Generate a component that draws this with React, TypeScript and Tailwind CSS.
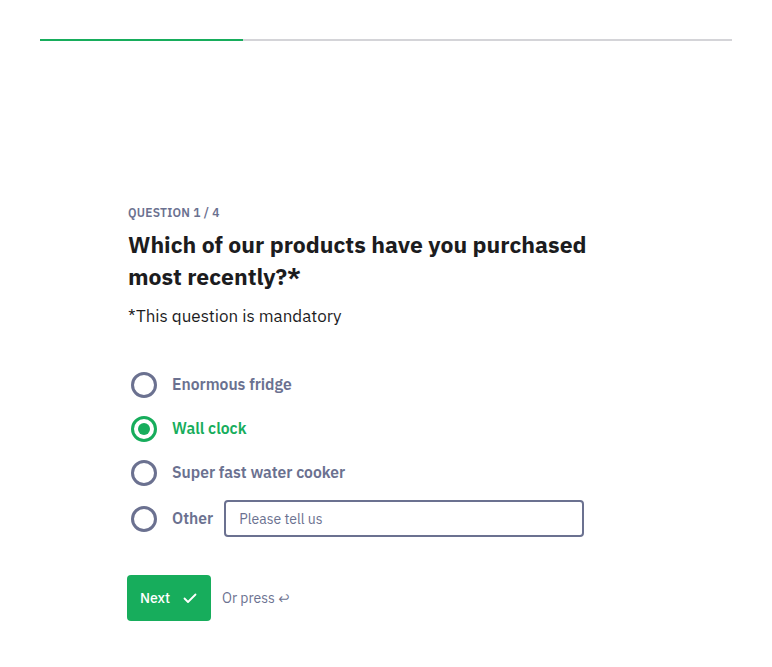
import React from "react";

const font = { fontFamily: '"IBM Plex Sans", Inter, "Noto Sans", sans-serif' };

function Radio({ checked }: { checked?: boolean }) {
  return (
    <span
      className={
        "flex h-[26px] w-[26px] shrink-0 items-center justify-center rounded-full border-[3px] " +
        (checked ? "border-[#17ad5c]" : "border-[#6b7190]")
      }
    >
      {checked && <span className="h-[12px] w-[12px] rounded-full bg-[#17ad5c]" />}
    </span>
  );
}

export default function App() {
  const options = ["Enormous fridge", "Wall clock", "Super fast water cooker"];
  return (
    <div className="min-h-[667px] w-full bg-white" style={font}>
      <div className="px-[40px] pt-[39px]">
        <div className="flex h-[2px] w-full bg-[#d4d4d8]">
          <div className="h-full w-[203px] bg-[#17ad5c]" />
        </div>
      </div>
      <div className="pl-[128px] pt-[163px]">
        <div className="text-[12px] font-semibold tracking-[0.02em] text-[#6b7190] leading-[18px]">
          QUESTION 1 / 4
        </div>
        <h1 className="mt-[6px] w-[470px] text-[23px] font-bold leading-[32px] text-[#1c1c1e]">
          Which of our products have you purchased most recently?*
        </h1>
        <p className="mt-[12px] text-[17px] leading-[24px] text-[#1c1c1e]">*This question is mandatory</p>

        <div className="mt-[44px] flex flex-col gap-[18px] pl-[3px]">
          {options.map((o, i) => (
            <div key={o} className="flex h-[26px] items-center gap-[15px]">
              <Radio checked={i === 1} />
              <span
                className={
                  "text-[15.7px] font-semibold " + (i === 1 ? "text-[#17ad5c]" : "text-[#6b7190]")
                }
              >
                {o}
              </span>
            </div>
          ))}
          <div className="-mt-[4px] flex items-center gap-[15px]">
            <Radio />
            <span className="text-[15.7px] font-semibold text-[#6b7190]">Other</span>
            <input
              placeholder="Please tell us"
              className="ml-[-4px] h-[37px] w-[360px] rounded-[4px] border-2 border-[#6b7190] px-[13px] text-[14px] text-[#1c1c1e] outline-none placeholder:text-[#6b7190]"
              style={font}
            />
          </div>
        </div>

        <div className="mt-[38px] flex items-center gap-[11px] -ml-[1px]">
          <button className="flex h-[46px] w-[84px] items-center justify-center gap-[12px] rounded-[4px] bg-[#17ad5c] text-[14px] font-medium text-white">
            Next
            <svg width="16" height="16" viewBox="0 0 16 16" fill="none">
              <path d="M2.5 8.5 L6 12 L13.5 4.5" stroke="white" strokeWidth="1.8" strokeLinecap="round" strokeLinejoin="round" />
            </svg>
          </button>
          <span className="text-[14px] text-[#6b7190]">Or press ↩</span>
        </div>
      </div>
    </div>
  );
}
